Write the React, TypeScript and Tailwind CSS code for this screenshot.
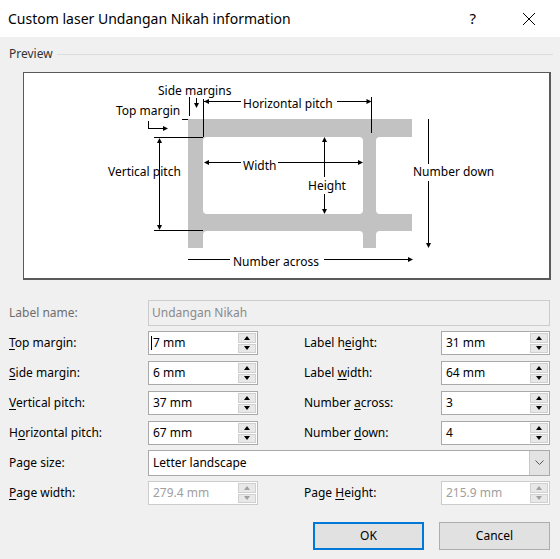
import React from 'react';

const FONT = { fontFamily: '"Noto Sans", "Open Sans", sans-serif' };

type Dir = 'l' | 'r' | 'u' | 'd';

function head(x: number, y: number, dir: Dir) {
  const p =
    dir === 'r'
      ? `${x},${y} ${x - 5},${y - 2.5} ${x - 5},${y + 2.5}`
      : dir === 'l'
        ? `${x},${y} ${x + 5},${y - 2.5} ${x + 5},${y + 2.5}`
        : dir === 'd'
          ? `${x},${y} ${x - 2.5},${y - 5} ${x + 2.5},${y - 5}`
          : `${x},${y} ${x - 2.5},${y + 5} ${x + 2.5},${y + 5}`;
  return <polygon points={p} fill="#000" />;
}

function Diagram() {
  const t = { fontSize: 12, fill: '#000', ...FONT } as const;
  return (
    <svg width={525} height={205} viewBox="24 73 525 205" className="block">
      <defs>
        <clipPath id="sheet">
          <rect x={188} y={119} width={224} height={129} />
        </clipPath>
      </defs>
      <g clipPath="url(#sheet)">
        <rect x={188} y={119} width={224} height={129} fill="#c2c2c2" />
        <rect x={203} y={137} width={160} height={77} rx={4} fill="#fff" />
        <rect x={376} y={137} width={60} height={77} rx={4} fill="#fff" />
        <rect x={203} y={231} width={160} height={40} rx={4} fill="#fff" />
        <rect x={376} y={231} width={60} height={40} rx={4} fill="#fff" />
      </g>
      <g stroke="#000" strokeWidth={1} fill="none" shapeRendering="crispEdges">
        {/* side margins */}
        <line x1={189.5} y1={97} x2={189.5} y2={116} />
        <line x1={196.5} y1={98} x2={196.5} y2={104} />
        {/* horizontal pitch */}
        <line x1={203.5} y1={99} x2={203.5} y2={137} />
        <line x1={204} y1={101.5} x2={241} y2={101.5} />
        <line x1={337} y1={101.5} x2={370} y2={101.5} />
        <line x1={371.5} y1={97} x2={371.5} y2={133} />
        {/* top margin */}
        <line x1={148.5} y1={121} x2={148.5} y2={129} />
        <line x1={148} y1={128.5} x2={163} y2={128.5} />
        <line x1={182} y1={119.5} x2={188} y2={119.5} />
        {/* vertical pitch */}
        <line x1={154} y1={137.5} x2={203} y2={137.5} />
        <line x1={154} y1={230.5} x2={203} y2={230.5} />
        <line x1={159.5} y1={142} x2={159.5} y2={226} />
        {/* width */}
        <line x1={207} y1={162.5} x2={241} y2={162.5} />
        <line x1={278} y1={162.5} x2={359} y2={162.5} />
        {/* height */}
        <line x1={324.5} y1={141} x2={324.5} y2={210} />
        {/* number down */}
        <line x1={428.5} y1={119} x2={428.5} y2={244} />
        {/* number across */}
        <line x1={188} y1={259.5} x2={409} y2={259.5} />
      </g>
      {head(196.5, 108, 'd')}
      {head(204, 101.5, 'l')}
      {head(371.5, 101.5, 'r')}
      {head(168, 128.5, 'r')}
      {head(159.5, 138, 'u')}
      {head(159.5, 230, 'd')}
      {head(204, 162.5, 'l')}
      {head(363, 162.5, 'r')}
      {head(324.5, 137, 'u')}
      {head(324.5, 214, 'd')}
      {head(428.5, 248, 'd')}
      {head(413, 259.5, 'r')}

      <rect x={305} y={177} width={44} height={17} fill="#fff" />
      <rect x={411} y={164} width={86} height={17} fill="#fff" />
      <rect x={230} y={253} width={94} height={16} fill="#fff" />

      <text x={158} y={95} {...t}>Side margins</text>
      <text x={243} y={108} {...t}>Horizontal pitch</text>
      <text x={116} y={115} {...t}>Top margin</text>
      <text x={108} y={176} {...t}>Vertical pitch</text>
      <text x={243} y={170} {...t}>Width</text>
      <text x={308} y={190} {...t}>Height</text>
      <text x={413} y={176} {...t}>Number down</text>
      <text x={233} y={266} {...t}>Number across</text>
    </svg>
  );
}

function Spin({ disabled }: { disabled?: boolean }) {
  const c = disabled ? 'border-[#a0a0a0]' : 'border-[#000]';
  return (
    <div className="ml-auto mr-px my-px flex w-[18px] flex-col gap-px">
      <div className="flex flex-1 items-center justify-center border border-[#d0d0d0] bg-[#e8e8e8]">
        <div className={`h-0 w-0 border-x-[3.5px] border-b-[4px] border-x-transparent ${c}`} />
      </div>
      <div className="flex flex-1 items-center justify-center border border-[#d0d0d0] bg-[#e8e8e8]">
        <div className={`h-0 w-0 border-x-[3.5px] border-t-[4px] border-x-transparent ${c}`} />
      </div>
    </div>
  );
}

function NumInput({
  value,
  disabled,
  cursor,
}: {
  value: string;
  disabled?: boolean;
  cursor?: boolean;
}) {
  return (
    <div
      className={`flex h-[24px] items-stretch border bg-white ${
        disabled ? 'border-[#cccccc] text-[#a0a0a0]' : 'border-[#a9a9a9] text-black'
      }`}
    >
      <div className="flex items-center pl-[2px] text-[12px]">
        {cursor && <span className="mr-px inline-block h-[14px] w-px bg-black" />}
        {!cursor && <span className="inline-block w-[2px]" />}
        {value}
      </div>
      <Spin disabled={disabled} />
    </div>
  );
}

function Label({ pre = '', u, post, gray }: { pre?: string; u?: string; post: string; gray?: boolean }) {
  return (
    <div className={`flex items-center text-[12px] ${gray ? 'text-[#6d6d6d]' : 'text-black'}`}>
      <span>
        {pre}
        {u && <span className="underline underline-offset-2">{u}</span>}
        {post}
      </span>
    </div>
  );
}

const rows = [
  { l: { u: 'T', post: 'op margin:' }, v: '7 mm', cursor: true, r: { pre: 'Label h', u: 'e', post: 'ight:' }, rv: '31 mm' },
  { l: { u: 'S', post: 'ide margin:' }, v: '6 mm', r: { pre: 'Label ', u: 'w', post: 'idth:' }, rv: '64 mm' },
  { l: { u: 'V', post: 'ertical pitch:' }, v: '37 mm', r: { pre: 'Number ', u: 'a', post: 'cross:' }, rv: '3' },
  { l: { pre: 'H', u: 'o', post: 'rizontal pitch:' }, v: '67 mm', r: { pre: 'Number ', u: 'd', post: 'own:' }, rv: '4' },
];

export default function App() {
  return (
    <div className="h-[559px] w-[560px] overflow-hidden bg-[#f0f0f0]" style={FONT}>
      <div className="flex h-[37px] items-center bg-white pl-[8px]">
        <span className="text-[14px] text-black">Custom laser Undangan Nikah information</span>
        <span className="ml-auto mr-[46px] text-[15px] text-black">?</span>
        <svg width={14} height={14} viewBox="0 0 14 14" className="mr-[24px]">
          <path d="M1 1L13 13M13 1L1 13" stroke="#000" strokeWidth={1} />
        </svg>
      </div>

      <div className="pt-[9px]">
        <div className="flex h-[16px] items-center pl-[9px] pr-[7px]">
          <span className="text-[12px] text-[#333]">Preview</span>
          <div className="ml-[4px] h-px flex-1 bg-[#dcdcdc]" />
        </div>
        <div className="ml-[23px] mt-[10px] w-[528px] border-b-2 border-l border-r-2 border-t border-[#5a5a5a] bg-white">
          <Diagram />
        </div>

        <div className="mt-[20px] pl-[9px]">
          <div className="grid grid-cols-[139px_402px]">
            <Label post="Label name:" gray />
            <div className="flex h-[26px] items-center border border-[#cccccc] bg-[#f0f0f0] pl-[3px] text-[12px] text-[#8a8a8a]">
              Undangan Nikah
            </div>
          </div>

          {rows.map((row, i) => (
            <div
              key={i}
              className={`grid grid-cols-[139px_110px_46px_137px_109px] ${i === 0 ? 'mt-[5px]' : 'mt-[6px]'}`}
            >
              <Label {...row.l} />
              <NumInput value={row.v} cursor={row.cursor} />
              <div />
              <Label {...row.r} />
              <NumInput value={row.rv} />
            </div>
          ))}

          <div className="mt-[5px] grid grid-cols-[139px_402px]">
            <Label post="Page size:" />
            <div className="flex h-[26px] items-stretch border border-[#a9a9a9] bg-white">
              <div className="flex flex-1 items-center pl-[4px] text-[12px] text-black">Letter landscape</div>
              <div className="flex w-[20px] items-center justify-center border-l border-[#c8c8c8] bg-[#e3e3e3]">
                <svg width={9} height={6} viewBox="0 0 9 6">
                  <path d="M0.5 0.5L4.5 4.5L8.5 0.5" stroke="#555" strokeWidth={1} fill="none" />
                </svg>
              </div>
            </div>
          </div>

          <div className="mt-[5px] grid grid-cols-[139px_110px_46px_137px_109px]">
            <Label u="P" post="age width:" />
            <NumInput value="279.4 mm" disabled />
            <div />
            <Label pre="Page " u="H" post="eight:" />
            <NumInput value="215.9 mm" disabled />
          </div>

          <div className="mt-[17px] flex justify-end gap-[15px] pr-[10px]">
            <button className="h-[28px] w-[111px] border-2 border-[#0078d7] bg-[#e1e1e1] text-[12px] text-black">
              OK
            </button>
            <button className="h-[28px] w-[111px] border border-[#adadad] bg-[#e1e1e1] text-[12px] text-black">
              Cancel
            </button>
          </div>
        </div>
      </div>
    </div>
  );
}
